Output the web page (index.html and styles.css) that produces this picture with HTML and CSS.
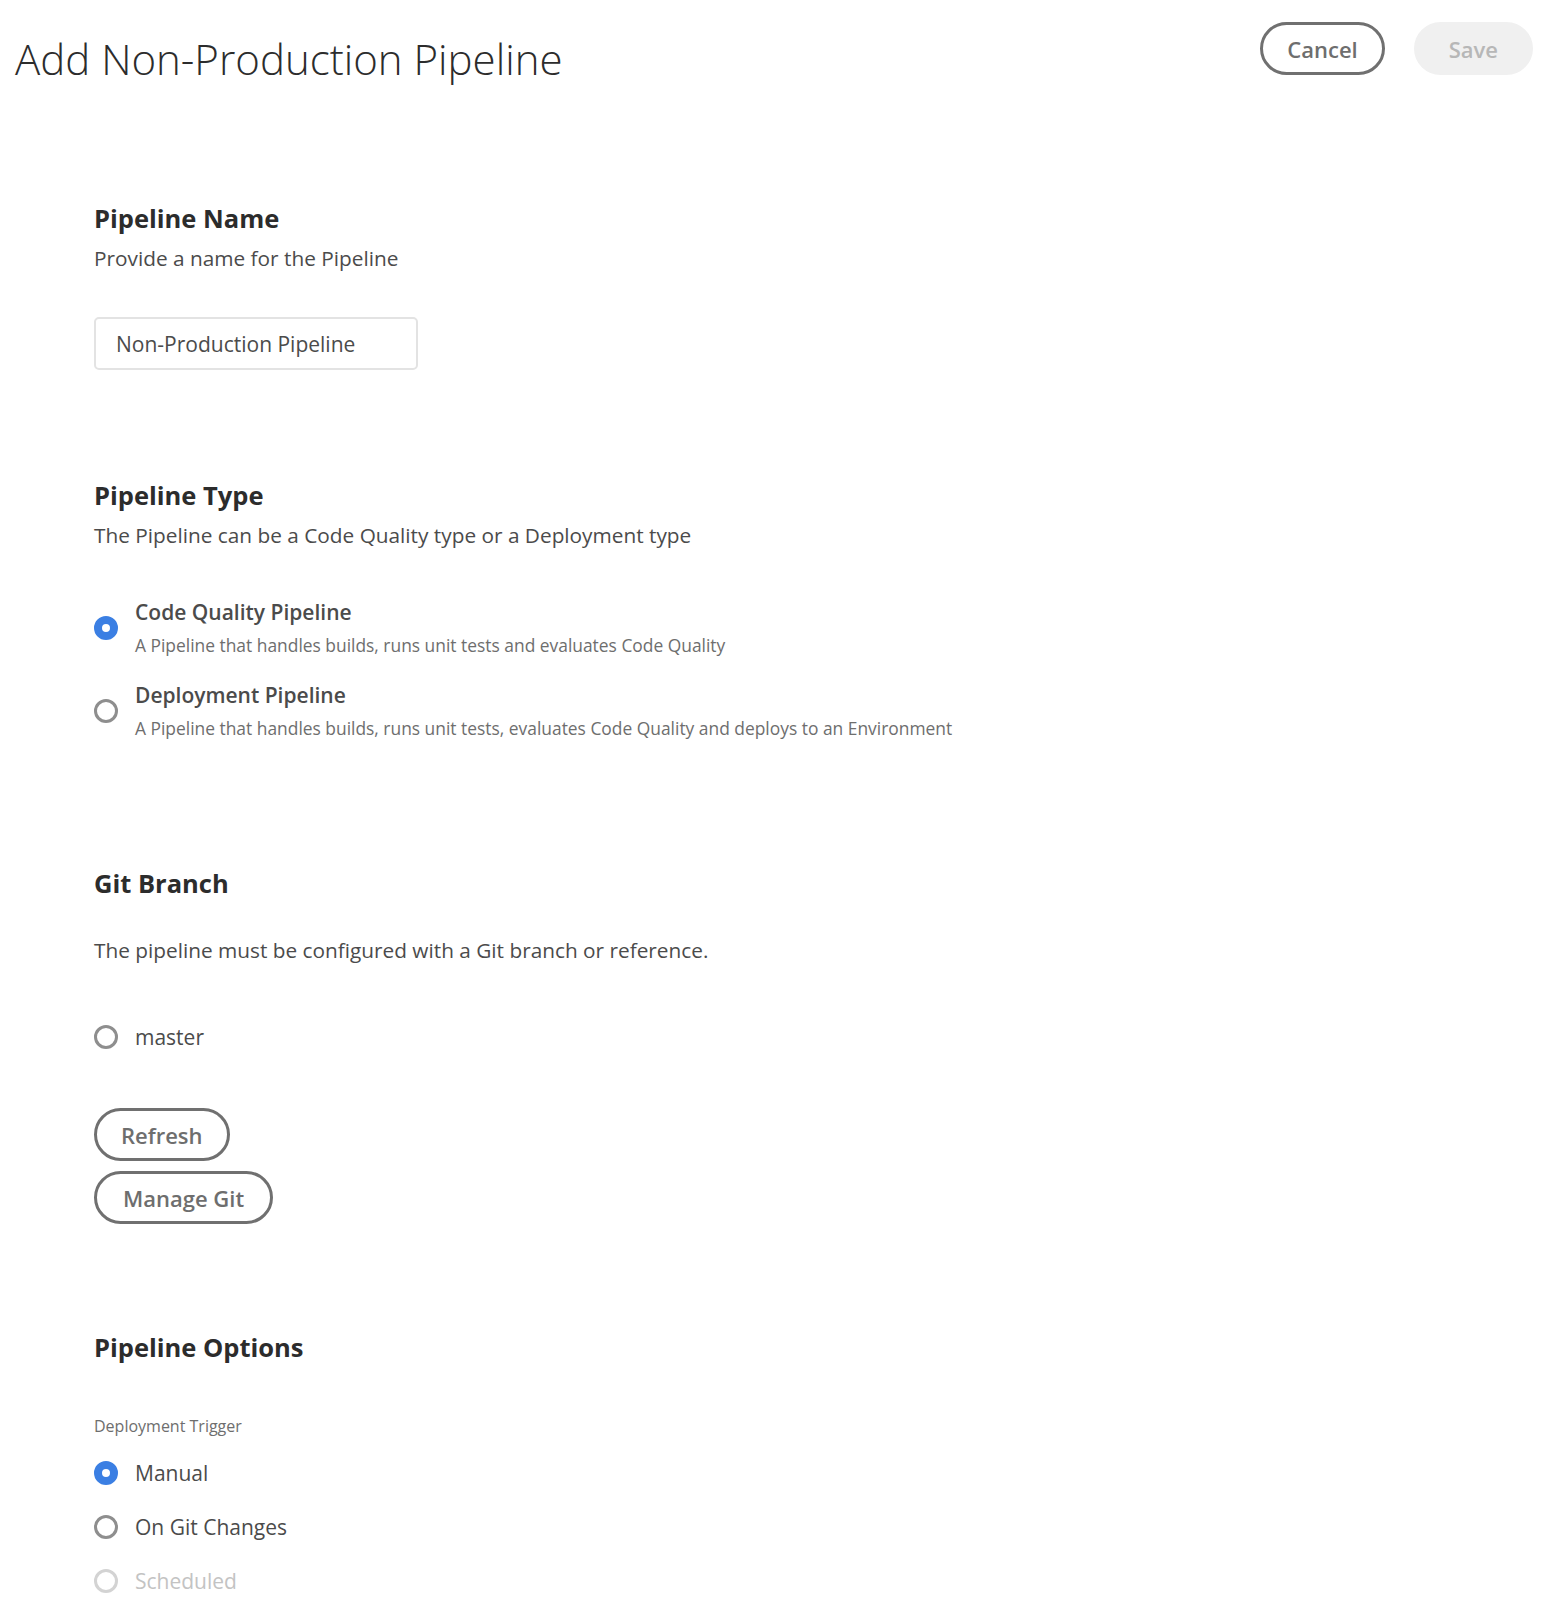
FILE: index.html
```html
<!DOCTYPE html>
<html lang="en">
<head>
<meta charset="utf-8">
<title>Add Non-Production Pipeline</title>
<link rel="stylesheet" href="styles.css">
</head>
<body>
<header class="page-header">
  <h1 class="page-title">Add Non-Production Pipeline</h1>
  <div class="actions">
    <button class="btn btn-outline">Cancel</button>
    <button class="btn btn-disabled" disabled>Save</button>
  </div>
</header>
<main class="form">
  <section class="section section-name">
    <h2 class="heading">Pipeline Name</h2>
    <p class="desc desc-tight">Provide a name for the Pipeline</p>
    <div class="textfield">Non-Production Pipeline</div>
  </section>

  <section class="section section-type">
    <h2 class="heading">Pipeline Type</h2>
    <p class="desc desc-tight">The Pipeline can be a Code Quality type or a Deployment type</p>
    <div class="type-list">
      <div class="type-item">
        <span class="radio radio-on"></span>
        <div class="type-text">
          <div class="type-label">Code Quality Pipeline</div>
          <div class="type-desc">A Pipeline that handles builds, runs unit tests and evaluates Code Quality</div>
        </div>
      </div>
      <div class="type-item">
        <span class="radio"></span>
        <div class="type-text">
          <div class="type-label">Deployment Pipeline</div>
          <div class="type-desc">A Pipeline that handles builds, runs unit tests, evaluates Code Quality and deploys to an Environment</div>
        </div>
      </div>
    </div>
  </section>

  <section class="section section-git">
    <h2 class="heading">Git Branch</h2>
    <p class="desc desc-loose">The pipeline must be configured with a Git branch or reference.</p>
    <div class="option option-branch"><span class="radio"></span><span class="option-label">master</span></div>
    <div class="git-buttons">
      <button class="btn btn-outline">Refresh</button>
      <button class="btn btn-outline btn-wide">Manage Git</button>
    </div>
  </section>

  <section class="section section-options">
    <h2 class="heading">Pipeline Options</h2>
    <div class="field-label">Deployment Trigger</div>
    <div class="trigger-list">
      <div class="option"><span class="radio radio-on"></span><span class="option-label">Manual</span></div>
      <div class="option"><span class="radio"></span><span class="option-label">On Git Changes</span></div>
      <div class="option option-disabled"><span class="radio radio-disabled"></span><span class="option-label">Scheduled</span></div>
    </div>
  </section>
</main>
</body>
</html>
```
FILE: styles.css
```css
* { box-sizing: border-box; }

html, body {
  margin: 0;
  padding: 0;
  background: #ffffff;
}

body {
  font-family: "Open Sans", "Noto Sans", "Liberation Sans", sans-serif;
  color: #4b4b4b;
}

.page-header {
  display: flex;
  justify-content: space-between;
  align-items: flex-start;
  padding: 22px 21px 0 15px;
}

.page-title {
  margin: 9px 0 0;
  font-size: 42px;
  line-height: 56px;
  font-weight: 300;
  color: #2c2c2c;
}

.actions {
  display: flex;
  gap: 29px;
}

.btn {
  height: 53px;
  border-radius: 27px;
  border: 3px solid #707070;
  background: #ffffff;
  font-family: inherit;
  font-size: 22px;
  font-weight: 600;
  color: #6e6e6e;
  padding: 0 24px;
  line-height: 1;
  cursor: pointer;
}

.btn-wide {
  padding: 0 26px;
}

.btn-disabled {
  border-color: transparent;
  background: #f0f0f0;
  color: #b7b7b7;
  padding: 0 32px;
  cursor: default;
}

.form {
  padding: 0 0 0 94px;
}

.heading {
  margin: 0;
  font-size: 25.5px;
  line-height: 34px;
  font-weight: 700;
  color: #2c2c2c;
}

.section-name .heading { margin-top: 114px; }
.section-type .heading { margin-top: 108px; }
.section-git .heading { margin-top: 126px; }
.section-options .heading { margin-top: 106px; }

.desc {
  margin: 0;
  font-size: 20.8px;
  line-height: 28px;
  color: #4b4b4b;
}

.desc-tight { margin-top: 9px; }
.desc-loose { margin-top: 36px; }

.textfield {
  margin-top: 45px;
  width: 324px;
  height: 53px;
  border: 2px solid #e3e3e3;
  border-radius: 5px;
  padding-left: 20px;
  display: flex;
  align-items: center;
  font-size: 21px;
  color: #4b4b4b;
}

.type-list {
  margin-top: 49px;
  display: flex;
  flex-direction: column;
  gap: 24px;
}

.type-item {
  display: flex;
  align-items: center;
  gap: 17px;
}

.type-text {
  display: flex;
  flex-direction: column;
  gap: 7px;
}

.type-label {
  font-size: 21px;
  line-height: 28px;
  font-weight: 600;
  color: #4b4b4b;
}

.type-desc {
  font-size: 17.4px;
  line-height: 24px;
  color: #6e6e6e;
}

.radio {
  flex: none;
  width: 24px;
  height: 24px;
  border-radius: 50%;
  border: 3px solid #8e8e8e;
  background: #ffffff;
}

.radio-on {
  border: 8px solid #3b7fe3;
}

.radio-disabled {
  border-color: #d3d3d3;
}

.option {
  display: flex;
  align-items: center;
  gap: 17px;
  height: 28px;
}

.option-label {
  font-size: 21px;
  line-height: 28px;
  color: #4b4b4b;
}

.option-disabled .option-label {
  color: #c3c3c3;
}

.option-branch {
  margin-top: 59px;
}

.git-buttons {
  margin-top: 57px;
  display: flex;
  flex-direction: column;
  align-items: flex-start;
  gap: 10px;
}

.field-label {
  margin-top: 51px;
  font-size: 16px;
  line-height: 22px;
  color: #6e6e6e;
}

.trigger-list {
  margin-top: 22px;
  display: flex;
  flex-direction: column;
  gap: 26px;
}
```
